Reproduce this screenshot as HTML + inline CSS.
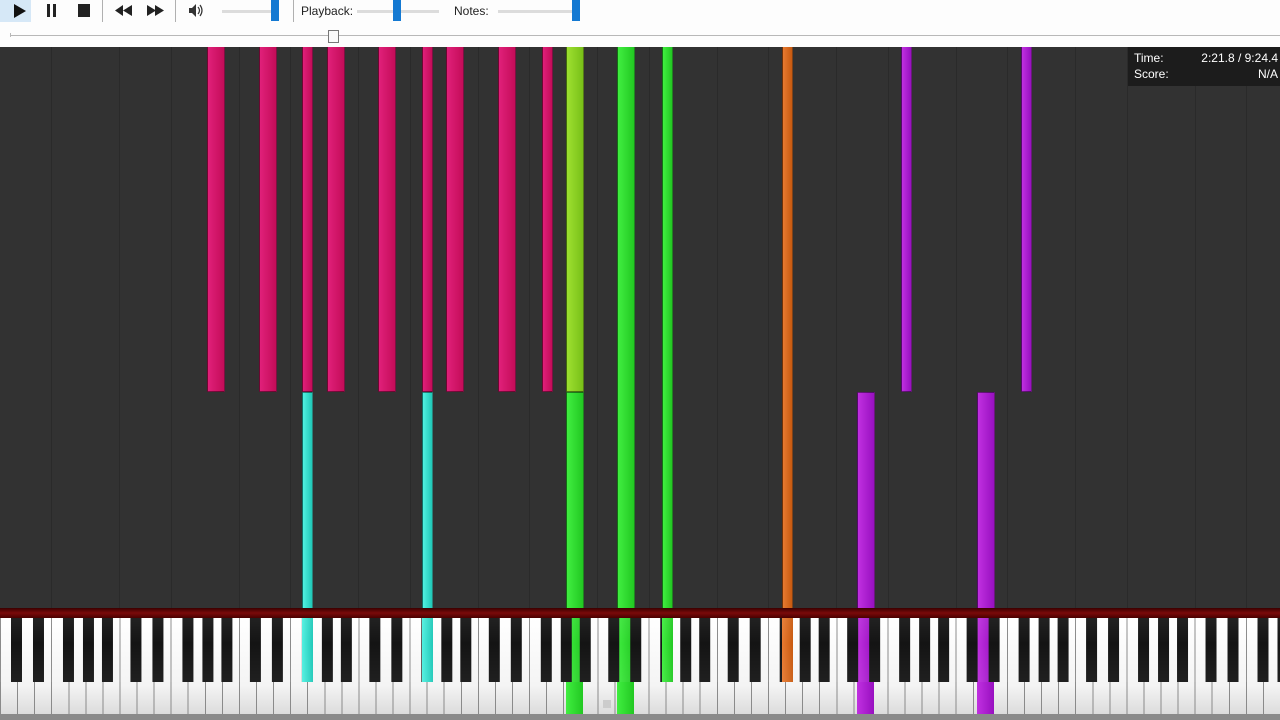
<!DOCTYPE html>
<html><head><meta charset="utf-8"><style>
*{margin:0;padding:0;box-sizing:border-box}
body{width:1280px;height:720px;overflow:hidden;background:#333;position:relative;font-family:"Liberation Sans",sans-serif}
.tb{position:absolute;left:0;top:0;width:1280px;height:47px;background:#fdfdfd}
.a{position:absolute}
.sep{position:absolute;top:0;width:1px;height:22px;background:#b0b0b0}
.trk{position:absolute;top:10px;height:3px;background:#dcdcdc}
.th{position:absolute;top:0;width:8px;height:21px;background:#1479d2}
.lbl{position:absolute;top:4px;font-size:12px;color:#222}
.roll{position:absolute;left:0;top:47px;width:1280px;height:561px;background:#323232;overflow:hidden}
.gl{position:absolute;top:0;width:1px;height:561px;background:#2a2a2a}
.n{position:absolute;border:1px solid rgba(0,0,0,.45);border-radius:1px}
.p{background:linear-gradient(to right,#e0207a,#c40c58)}
.g{background:linear-gradient(to right,#40ee40,#22c822)}
.yg{background:linear-gradient(to right,#9ee030,#78c018)}
.c{background:linear-gradient(to right,#50f0e0,#20c8b8)}
.o{background:linear-gradient(to right,#e87a30,#c85a10)}
.v{background:linear-gradient(to right,#c030e0,#9810c0)}
.red{position:absolute;left:0;top:608px;width:1280px;height:10px;background:linear-gradient(#3a0000,#7a0a0a 50%,#4a0000)}
.wk{position:absolute;left:0;top:618px;width:1280px;height:96px;background:repeating-linear-gradient(to right,#8a8a8a 0 1px,transparent 1px 17.0667px),linear-gradient(#fff,#f4f4f4 70%,#dcdcdc)}
.bk{position:absolute;left:0;top:618px;width:1280px;height:64px;background:linear-gradient(to right,transparent 11px,#141414 11px 22px,transparent 22px 33px,#141414 33px 44px,transparent 44px 63px,#141414 63px 74px,transparent 74px 83px,#141414 83px 94px,transparent 94px 102px,#141414 102px 113px,transparent 113px);background-size:119.4667px 100%;background-repeat:repeat-x}
.gloss{position:absolute;left:0;top:618px;width:1280px;height:64px;background:linear-gradient(rgba(255,255,255,.06),rgba(255,255,255,0) 40%,rgba(255,255,255,.05))}
.bot{position:absolute;left:0;top:714px;width:1280px;height:6px;background:#8a8a8a}
</style></head><body>
<div class="tb">
 <div class="a" style="left:0;top:0;width:31px;height:22px;background:#d6e8f7"></div>
 <svg class="a" style="left:13px;top:4px" width="14" height="14"><path d="M1 0 L13 7 L1 14Z" fill="#111"/></svg>
 <div class="a" style="left:47px;top:4px;width:3px;height:13px;background:#222"></div>
 <div class="a" style="left:53px;top:4px;width:3px;height:13px;background:#222"></div>
 <div class="a" style="left:78px;top:4px;width:12px;height:13px;background:#222"></div>
 <div class="sep" style="left:102px"></div>
 <svg class="a" style="left:115px;top:5px" width="18" height="11"><path d="M0 5.5L8 0V11Z M8 5.5L17 0V11Z" fill="#222"/></svg>
 <svg class="a" style="left:147px;top:5px" width="18" height="11"><path d="M0 0L9 5.5L0 11Z M8 0L17 5.5L8 11Z" fill="#222"/></svg>
 <div class="sep" style="left:175px"></div>
 <svg class="a" style="left:188px;top:3px" width="16" height="15"><path d="M1 5H4L8 1V14L4 10H1Z" fill="#333"/><path d="M10 4Q13 7.5 10 11M12 2Q16 7.5 12 13" stroke="#333" fill="none" stroke-width="1.2"/></svg>
 <div class="trk" style="left:222px;width:56px"></div><div class="th" style="left:271px"></div>
 <div class="sep" style="left:293px"></div>
 <div class="lbl" style="left:301px">Playback:</div>
 <div class="trk" style="left:357px;width:82px"></div><div class="th" style="left:393px"></div>
 <div class="lbl" style="left:454px">Notes:</div>
 <div class="trk" style="left:498px;width:82px"></div><div class="th" style="left:572px"></div>
 <div class="a" style="left:10px;top:35px;width:1270px;height:1px;background:#b8b8b8"></div>
 <div class="a" style="left:10px;top:33px;width:1px;height:4px;background:#b8b8b8"></div>
 <div class="a" style="left:328px;top:30px;width:11px;height:13px;background:#fafafa;border:1px solid #777"></div>
</div>
<div class="roll">
 <div class="gl" style="left:51px"></div><div class="gl" style="left:119px"></div><div class="gl" style="left:171px"></div><div class="gl" style="left:239px"></div><div class="gl" style="left:290px"></div><div class="gl" style="left:358px"></div><div class="gl" style="left:410px"></div><div class="gl" style="left:478px"></div><div class="gl" style="left:529px"></div><div class="gl" style="left:597px"></div><div class="gl" style="left:649px"></div><div class="gl" style="left:717px"></div><div class="gl" style="left:768px"></div><div class="gl" style="left:836px"></div><div class="gl" style="left:888px"></div><div class="gl" style="left:956px"></div><div class="gl" style="left:1007px"></div><div class="gl" style="left:1075px"></div><div class="gl" style="left:1127px"></div><div class="gl" style="left:1195px"></div><div class="gl" style="left:1246px"></div>
 <div class="n p" style="left:207px;top:-2px;width:18px;height:347px"></div>
 <div class="n p" style="left:259px;top:-2px;width:18px;height:347px"></div>
 <div class="n p" style="left:302px;top:-2px;width:11px;height:347px"></div>
 <div class="n p" style="left:327px;top:-2px;width:18px;height:347px"></div>
 <div class="n p" style="left:378px;top:-2px;width:18px;height:347px"></div>
 <div class="n p" style="left:422px;top:-2px;width:11px;height:347px"></div>
 <div class="n p" style="left:446px;top:-2px;width:18px;height:347px"></div>
 <div class="n p" style="left:498px;top:-2px;width:18px;height:347px"></div>
 <div class="n p" style="left:542px;top:-2px;width:11px;height:347px"></div>
 <div class="n yg" style="left:566px;top:-2px;width:18px;height:347px"></div>
 <div class="n g" style="left:566px;top:345px;width:18px;height:220px"></div>
 <div class="n g" style="left:617px;top:-2px;width:18px;height:567px"></div>
 <div class="n g" style="left:662px;top:-2px;width:11px;height:567px"></div>
 <div class="n o" style="left:782px;top:-2px;width:11px;height:567px"></div>
 <div class="n v" style="left:901px;top:-2px;width:11px;height:347px"></div>
 <div class="n v" style="left:1021px;top:-2px;width:11px;height:347px"></div>
 <div class="n c" style="left:302px;top:345px;width:11px;height:220px"></div>
 <div class="n c" style="left:422px;top:345px;width:11px;height:220px"></div>
 <div class="n v" style="left:857px;top:345px;width:18px;height:220px"></div>
 <div class="n v" style="left:977px;top:345px;width:18px;height:220px"></div>
 <div class="a" style="left:1128px;top:0;width:152px;height:39px;background:#1c1c1c;color:#fff;font-size:12px">
  <div class="a" style="left:6px;top:4px">Time:</div><div class="a" style="right:2px;top:4px">2:21.8 / 9:24.4</div>
  <div class="a" style="left:6px;top:20px">Score:</div><div class="a" style="right:2px;top:20px">N/A</div>
 </div>
</div>
<div class="red"></div>
<div class="wk"></div>
<div class="a g" style="left:566px;top:618px;width:17px;height:96px"></div>
<div class="a g" style="left:617px;top:618px;width:17px;height:96px"></div>
<div class="a v" style="left:857px;top:618px;width:17px;height:96px"></div>
<div class="a v" style="left:977px;top:618px;width:17px;height:96px"></div>
<div class="bk"></div>
<div class="a c" style="left:302px;top:618px;width:11px;height:64px"></div>
<div class="a c" style="left:422px;top:618px;width:11px;height:64px"></div>
<div class="a g" style="left:662px;top:618px;width:11px;height:64px"></div>
<div class="a o" style="left:782px;top:618px;width:11px;height:64px"></div>
<div class="gloss"></div>
<div class="a" style="left:603px;top:700px;width:8px;height:8px;background:#ccc"></div>
<div class="bot"></div>
</body></html>
